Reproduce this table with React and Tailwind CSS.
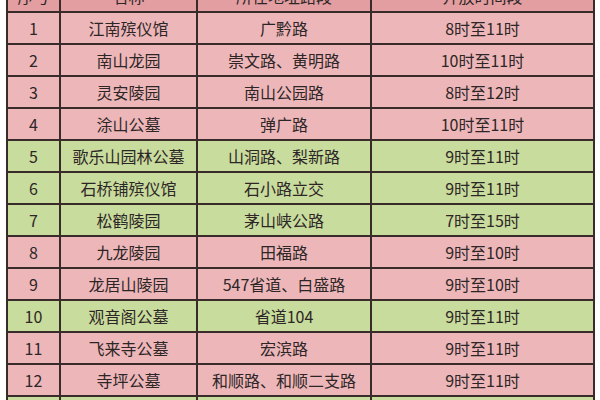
import React from "react";

const rows = [
  { no: "1", name: "江南殡仪馆", road: "广黔路", time: "8时至11时", tone: "pink" },
  { no: "2", name: "南山龙园", road: "崇文路、黄明路", time: "10时至11时", tone: "pink" },
  { no: "3", name: "灵安陵园", road: "南山公园路", time: "8时至12时", tone: "pink" },
  { no: "4", name: "涂山公墓", road: "弹广路", time: "10时至11时", tone: "pink" },
  { no: "5", name: "歌乐山园林公墓", road: "山洞路、梨新路", time: "9时至11时", tone: "green" },
  { no: "6", name: "石桥铺殡仪馆", road: "石小路立交", time: "9时至11时", tone: "green" },
  { no: "7", name: "松鹤陵园", road: "茅山峡公路", time: "7时至15时", tone: "green" },
  { no: "8", name: "九龙陵园", road: "田福路", time: "9时至10时", tone: "pink" },
  { no: "9", name: "龙居山陵园", road: "547省道、白盛路", time: "9时至10时", tone: "pink" },
  { no: "10", name: "观音阁公墓", road: "省道104", time: "9时至11时", tone: "green" },
  { no: "11", name: "飞来寺公墓", road: "宏滨路", time: "9时至11时", tone: "pink" },
  { no: "12", name: "寺坪公墓", road: "和顺路、和顺二支路", time: "9时至11时", tone: "pink" },
  { no: "13", name: "", road: "", time: "", tone: "green" },
];

const Row = ({ r, header }) => {
  const bg = header
    ? "bg-[#e39ea1]"
    : r.tone === "green"
    ? "bg-[#c8dc9d]"
    : "bg-[#edb7ba]";
  return (
    <div className={`flex h-[32px] border-b-2 border-[#3a2b2b] ${bg}`}>
      <div className="w-[53px] flex items-center justify-center border-r-2 border-[#3a2b2b]">{r.no}</div>
      <div className="w-[137px] flex items-center justify-center border-r-2 border-[#3a2b2b]">{r.name}</div>
      <div className="w-[174px] flex items-center justify-center border-r-2 border-[#3a2b2b]">{r.road}</div>
      <div className="flex-1 flex items-center justify-center">{r.time}</div>
    </div>
  );
};

export default function App() {
  return (
    <div className="w-[600px] h-[400px] overflow-hidden bg-white pl-[6px] pr-[5px]">
      <div
        className="-mt-[19px] border-l-2 border-r-2 border-[#3a2b2b] text-[16px] text-[#2e2626]"
        style={{ fontFamily: '"Noto Sans CJK SC", "Noto Sans", sans-serif' }}
      >
        <Row header r={{ no: "序号", name: "名称", road: "所在地址路段", time: "开放时间段" }} />
        {rows.map((r) => (
          <Row key={r.no} r={r} />
        ))}
      </div>
    </div>
  );
}
